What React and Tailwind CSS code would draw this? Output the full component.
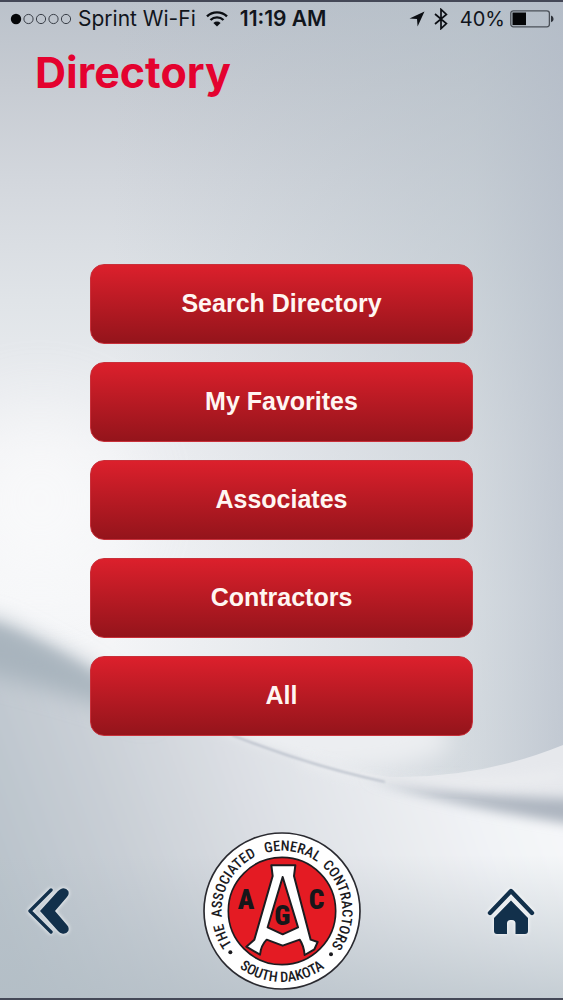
import React from "react";

const menuItems = [
  "Search Directory",
  "My Favorites",
  "Associates",
  "Contractors",
  "All",
];

function Backdrop() {
  return (
    <svg
      className="absolute inset-0 h-full w-full"
      viewBox="0 0 563 1000"
      preserveAspectRatio="none"
      aria-hidden="true"
    >
      <defs>
        <linearGradient id="sky" x1="0" y1="0" x2="0" y2="1">
          <stop offset="0" stopColor="#bbc2cb" />
          <stop offset="0.08" stopColor="#c6cbd2" />
          <stop offset="0.18" stopColor="#d3d7dd" />
          <stop offset="0.3" stopColor="#e0e4e8" />
          <stop offset="0.45" stopColor="#eff0f3" />
          <stop offset="0.6" stopColor="#f5f6f8" />
          <stop offset="0.8" stopColor="#f1f2f4" />
        </linearGradient>
        <linearGradient id="rightShade" x1="0" y1="0" x2="1" y2="0">
          <stop offset="0.2" stopColor="#b3bdc7" stopOpacity="0" />
          <stop offset="0.84" stopColor="#b4bfc8" stopOpacity="0.5" />
          <stop offset="1" stopColor="#b2bbc7" stopOpacity="0.75" />
        </linearGradient>
        <linearGradient id="floor" x1="0" y1="0.62" x2="1" y2="0.38">
          <stop offset="0.04" stopColor="#b8c2ca" />
          <stop offset="0.25" stopColor="#c8ced5" />
          <stop offset="0.5" stopColor="#dee1e6" />
          <stop offset="0.8" stopColor="#f1f3f6" />
          <stop offset="1" stopColor="#f8f9fb" />
        </linearGradient>
        <linearGradient id="floorFade" x1="0" y1="0" x2="0" y2="1">
          <stop offset="0.4" stopColor="#b2bdc5" stopOpacity="0" />
          <stop offset="1" stopColor="#b2bdc5" stopOpacity="0.7" />
        </linearGradient>
        <filter id="blur1" x="-20%" y="-50%" width="140%" height="200%">
          <feGaussianBlur stdDeviation="1" />
        </filter>
        <filter id="blur6" x="-20%" y="-80%" width="140%" height="260%">
          <feGaussianBlur stdDeviation="6" />
        </filter>
        <filter id="blur12" x="-50%" y="-50%" width="200%" height="200%">
          <feGaussianBlur stdDeviation="11" />
        </filter>
        <filter id="blur40" x="-80%" y="-80%" width="260%" height="260%">
          <feGaussianBlur stdDeviation="45" />
        </filter>
      </defs>

      <rect width="563" height="1000" fill="url(#sky)" />
      <rect width="563" height="800" fill="url(#rightShade)" />
      <ellipse cx="40" cy="500" rx="80" ry="90" fill="#fff" opacity="0.6" filter="url(#blur40)" />
      <ellipse cx="340" cy="740" rx="110" ry="30" fill="#eceef1" filter="url(#blur12)" />

      {/* lower sheet, then the shadow along its left edge */}
      <path
        d="M-40 615 Q50 640 120 694 L235 737 Q370 786 600 828 V1040 H-40 Z"
        fill="url(#floor)"
        filter="url(#blur6)"
      />
      <path
        d="M-40 614 L0 622 Q80 658 150 708 L150 722 Q60 690 -40 668 Z"
        fill="#a8b4bd"
        filter="url(#blur12)"
      />
      <rect y="760" width="563" height="240" fill="url(#floorFade)" />

      {/* folded edge on the right */}
      <path
        d="M232 735 Q320 770 390 778 Q480 780 563 746 V810 Q460 806 350 773 Z"
        fill="#e6e8ec"
      />
      <path
        d="M365 778 Q440 806 600 830 V800 Q450 800 365 778 Z"
        fill="#adb5c0"
        filter="url(#blur6)"
      />
      <path
        d="M300 762 Q350 777 400 782 Q470 788 563 776"
        fill="none"
        stroke="#f2f3f5"
        strokeWidth="7"
        opacity="0.6"
        filter="url(#blur6)"
      />
      <path
        d="M232 736 Q310 767 385 783"
        fill="none"
        stroke="#b9bfca"
        strokeWidth="2"
        filter="url(#blur1)"
      />
    </svg>
  );
}

function StatusBar() {
  return (
    <div className="flex h-[34px] items-center pl-[10px] pr-[9px] text-[21px] leading-6 text-[#11151c]">
      <svg className="h-3 w-[62px]" viewBox="0 0 62 12" aria-hidden="true">
        <circle cx="6" cy="6" r="5.2" fill="#050608" />
        {[18.5, 31, 43.5, 56].map((cx) => (
          <circle key={cx} cx={cx} cy="6" r="4.6" fill="none" stroke="#3a3f48" strokeWidth="1" />
        ))}
      </svg>
      <span className="ml-[6px]">Sprint Wi-Fi</span>
      <svg className="ml-[10px] h-4 w-[22px]" viewBox="0 0 22 16" fill="none" aria-hidden="true">
        <path d="M1 5.4 A14.5 14.5 0 0 1 21 5.4" stroke="#0b0e13" strokeWidth="2.4" />
        <path d="M4.5 9 A9.4 9.4 0 0 1 17.5 9" stroke="#0b0e13" strokeWidth="2.4" />
        <path d="M11 15.6 L7.4 12 A5.2 5.2 0 0 1 14.6 12 Z" fill="#0b0e13" />
      </svg>
      <span className="ml-3 font-semibold">11:19 AM</span>

      <div className="ml-auto flex items-center text-[20px]">
        <svg className="h-4 w-4" viewBox="0 0 16 16" aria-hidden="true">
          <path d="M15.5 0.5 L8.6 15.5 L8 8 L0.5 7.4 Z" fill="#0b0e13" />
        </svg>
        <svg className="ml-[9px] h-[22px] w-[14px]" viewBox="0 0 14 22" aria-hidden="true">
          <path
            d="M1 6 L12.4 15.6 L7 20.6 V1.4 L12.4 6.4 L1 16"
            fill="none"
            stroke="#0b0e13"
            strokeWidth="1.7"
          />
        </svg>
        <span className="ml-3">40%</span>
        <svg className="ml-[5px] h-[18px] w-11" viewBox="0 0 44 18" aria-hidden="true">
          <rect x="0.8" y="0.8" width="38.6" height="16" rx="2.5" fill="none" stroke="#4b5058" strokeWidth="1.3" />
          <rect x="2.5" y="2.5" width="13.5" height="12.6" fill="#050608" />
          <path d="M41 5.6 Q43.6 6.4 43.6 9 Q43.6 11.6 41 12.2 Z" fill="#2d3139" />
        </svg>
      </div>
    </div>
  );
}

function Seal() {
  return (
    <svg
      className="h-[158px] w-[158px]"
      viewBox="38 36 474 474"
      role="img"
      aria-label="The Associated General Contractors of South Dakota"
    >
      <defs>
        {/* clockwise ring starting at the bottom, and the lower arc read left to right */}
        <path id="ring" d="M275 454 A181 181 0 0 1 275 92 A181 181 0 0 1 275 454" />
        <path id="lowerArc" d="M62 273 A213 213 0 0 0 488 273" />
      </defs>
      <circle cx="275" cy="273" r="234" fill="#fff" stroke="#2a2a30" strokeWidth="5" />
      <circle cx="275" cy="273" r="161" fill="#e41b23" stroke="#1c1c20" strokeWidth="5" />

      <g className="font-['Roboto_Condensed','Liberation_Sans_Narrow','Liberation_Sans',sans-serif] text-[43px] font-medium" fill="#1b1b1f" textAnchor="middle">
        <text><textPath href="#ring" startOffset="18.6%">THE</textPath></text>
        <text><textPath href="#ring" startOffset="33.2%">ASSOCIATED</textPath></text>
        <text><textPath href="#ring" startOffset="52.7%">GENERAL</textPath></text>
        <text><textPath href="#ring" startOffset="73.2%">CONTRACTORS</textPath></text>
        <text><textPath href="#lowerArc" startOffset="50%">SOUTH DAKOTA</textPath></text>
      </g>
      <circle cx="120" cy="397" r="6" fill="#1b1b1f" />
      <circle cx="422" cy="403" r="6" fill="#1b1b1f" />

      <path
        d="M243 136 H315 L311 168 L361 359 L382 366 L372 388 L343 405 Q340 376 328 359 L277 377 L229 359 Q212 376 209 404 L168 380 L192 359 L247 168 Z M277 171 L232 322 L277 343 L323 322 Z"
        fill="#fff"
        fillRule="evenodd"
        stroke="#1c1c20"
        strokeWidth="6"
        strokeLinejoin="round"
      />
      <g className="font-['Roboto_Condensed','Liberation_Sans_Narrow','Liberation_Sans',sans-serif] text-[82px] font-black" fill="#161619" textAnchor="middle">
        <text x="167" y="268">A</text>
        <text x="276" y="315">G</text>
        <text x="379" y="268">C</text>
      </g>
    </svg>
  );
}

function App() {
  return (
    <div className="relative flex min-h-screen flex-col overflow-hidden border-b-2 border-t-2 border-[#444857] font-['Inter','Liberation_Sans',sans-serif]">
      <Backdrop />

      <div className="relative flex flex-1 flex-col">
        <StatusBar />

        <h1 className="pl-[35px] text-[43px] font-bold leading-[72px] text-[#e4022f]">
          Directory
        </h1>

        <nav className="mt-[156px] flex flex-col gap-[18px] px-[90px]">
          {menuItems.map((item) => (
            <button
              key={item}
              type="button"
              className="h-20 rounded-[14px] border border-[#c8303a] bg-linear-to-b from-[#dc202c] to-[#94141b] font-['Liberation_Sans',sans-serif] text-[25px] font-bold text-[#fff6f2]"
            >
              {item}
            </button>
          ))}
        </nav>

        <footer className="mt-auto flex items-center justify-between pb-2 pl-7 pr-7 pt-10">
          <a href="#back" aria-label="Back" className="flex w-12 drop-shadow-[0_0_2px_#ffffff]">
            <svg className="h-12 w-[42px]" viewBox="0 0 42 48" fill="none">
              <path
                d="M23 3 L2 24 L23 45"
                stroke="#12304b"
                strokeWidth="3.4"
                strokeLinecap="round"
                strokeLinejoin="round"
              />
              <path
                d="M34 1.5 Q38 0.5 40.3 4 Q41.5 7.5 39 10 L27 24 L39 38 Q41.5 40.5 40.3 44 Q38 47.5 34 46.5 Q32 46 30 44 L12 24 L30 4 Q32 2 34 1.5 Z"
                fill="#12304b"
              />
            </svg>
          </a>
          <Seal />
          <a href="#home" aria-label="Home" className="drop-shadow-[0_0_2px_#ffffff]">
            <svg className="h-12 w-12" viewBox="0 0 48 48" fill="none">
              <path
                d="M3 26 L24 4 L45 26"
                stroke="#12304b"
                strokeWidth="4.4"
                strokeLinecap="round"
                strokeLinejoin="round"
              />
              <path
                d="M24 13.5 L41 31 V44 Q41 47 38 47 H28.5 V36.5 Q28.5 33 25 33 H23.5 Q20 33 20 36.5 V47 H10 Q7 47 7 44 V31 Z"
                fill="#12304b"
              />
            </svg>
          </a>
        </footer>
      </div>
    </div>
  );
}

export default App;
